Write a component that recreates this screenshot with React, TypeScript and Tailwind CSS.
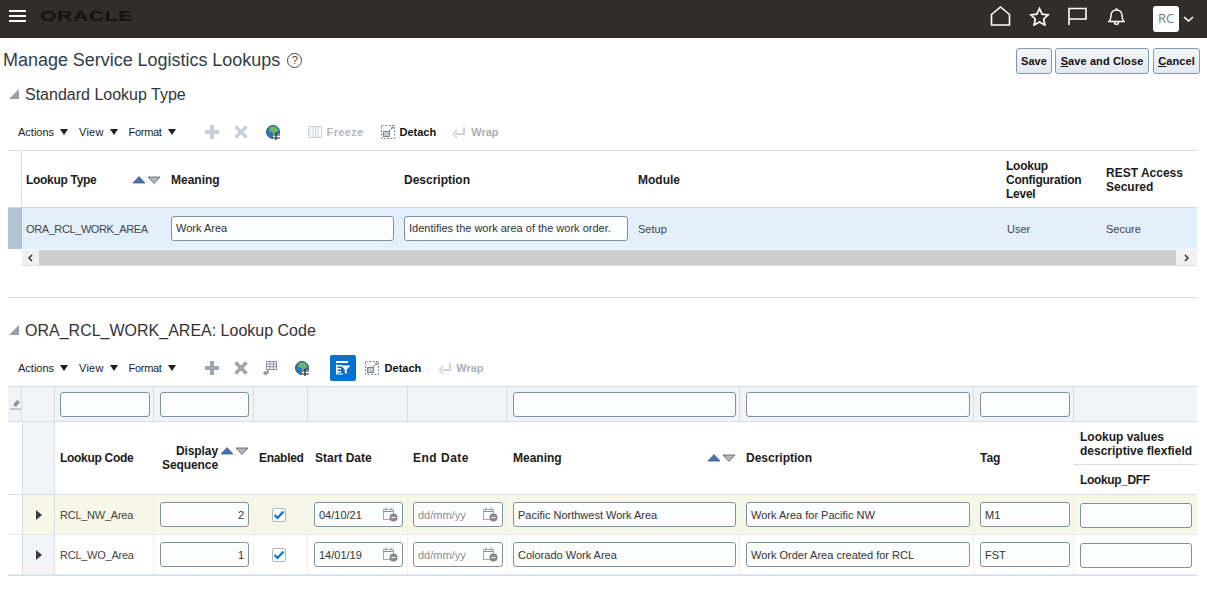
import React from "react";

const ICON_GRAY = "#c9cfd4";

function Caret() {
  return <span className="ml-[6px] w-0 h-0 border-l-[4px] border-r-[4px] border-t-[6px] border-l-transparent border-r-transparent border-t-[#1f1f1f]" />;
}

function Plus({ color }: { color: string }) {
  return (
    <svg width="14" height="14" viewBox="0 0 14 14">
      <path d="M5 0h4v5h5v4H9v5H5V9H0V5h5z" fill={color} />
    </svg>
  );
}

function Cross({ color }: { color: string }) {
  return (
    <svg width="14" height="14" viewBox="0 0 14 14">
      <path d="M1.5 1.5 12.5 12.5M12.5 1.5 1.5 12.5" stroke={color} strokeWidth="3.4" />
    </svg>
  );
}

function Globe() {
  return (
    <svg width="15" height="15" viewBox="0 0 15 15">
      <circle cx="7" cy="7" r="6.5" fill="#2e79ad" />
      <path d="M4 2c2-1 5-1 6 0 1 2 2 3 3 4l-3 1-2 2-2-2-3-1z" fill="#6fb56a" />
      <circle cx="7" cy="7" r="6.5" fill="none" stroke="#255b80" />
      <rect x="7" y="9" width="8" height="5.5" fill="#fff" />
      <path d="M10 8v7M7 10h7M7 13h7" stroke="#222" strokeWidth="1.2" />
    </svg>
  );
}

function Freeze() {
  return (
    <svg width="14" height="14" viewBox="0 0 14 14" fill="none" stroke="#cdd3d8">
      <rect x="0.5" y="1.5" width="13" height="11" />
      <path d="M5 2v10M7.5 2v10M10 2v10M2 4v7" />
    </svg>
  );
}

function Detach() {
  return (
    <svg width="14" height="14" viewBox="0 0 14 14" fill="none" stroke="#7d8388">
      <rect x="0.5" y="0.5" width="13" height="13" strokeDasharray="2 1.5" />
      <rect x="2.5" y="6.5" width="6" height="5" fill="#c6cbd0" />
      <path d="M8 6l4-4M10 2h2v2" />
    </svg>
  );
}

function WrapIcon() {
  return (
    <svg width="14" height="14" viewBox="0 0 14 14" fill="none" stroke="#cdd3d8" strokeWidth="2">
      <path d="M12 2v7H4" />
      <path d="M5 5 1.5 9 5 13" strokeWidth="1.6" />
    </svg>
  );
}

function ColumnsIcon() {
  return (
    <svg width="14" height="15" viewBox="0 0 14 15" fill="none" stroke="#8a9096">
      <path d="M3.5 0.5h10v8h-10zM3.5 3h10M3.500 5.700h10M7 0.500v8M10.300 0.500v8" />
      <path d="M5 9v3H1.500M3.500 10 1 12l2.500 2" strokeWidth="1.5" />
    </svg>
  );
}

function FilterIcon() {
  return (
    <svg width="16" height="16" viewBox="0 0 16 16">
      <path d="M1 1h12v2H1zM1 4.500h1.500v9H1zM1 5h6v1.500H1zM1 8h5v1.500H1zM1 11h5v1.500H1zM1 13.500h7v1H1z" fill="#fff" />
      <path d="M6 5.500h9.500l-3.800 4v4.500l-2-1.200v-3.300z" fill="#fff" />
    </svg>
  );
}

function SortPair() {
  return (
    <svg width="29" height="8" viewBox="0 0 29 8" className="shrink-0">
      <path d="M7 0.500 13 7H1z" fill="#4b71b5" stroke="#3a4f78" strokeWidth="0.7" />
      <path d="M16 1h12l-6 6.500z" fill="#b4b8bc" stroke="#55595c" strokeWidth="0.8" />
    </svg>
  );
}

function Toolbar({ second }: { second?: boolean }) {
  const off = second ? "#9ea4a9" : ICON_GRAY;
  return (
    <div className="flex items-center h-[26px] pl-[18px] text-[11px] text-[#1c1c1c]">
      <span>Actions</span>
      <Caret />
      <span className="ml-[11px] tracking-[0.2px]">View</span>
      <Caret />
      <span className="ml-[11px] tracking-[-0.3px]">Format</span>
      <Caret />
      <span className="ml-[29px]"><Plus color={off} /></span>
      <span className="ml-[15px]"><Cross color={off} /></span>
      {second ? (
        <>
          <span className="ml-[15px]"><ColumnsIcon /></span>
          <span className="ml-[18px]"><Globe /></span>
          <span className="ml-[20px] w-[26px] h-[26px] rounded-[2px] bg-[#0572ce] flex items-center justify-center"><FilterIcon /></span>
          <span className="ml-[9px]"><Detach /></span>
          <span className="ml-[6px] font-bold text-[#111]">Detach</span>
          <span className="ml-[17px]"><WrapIcon /></span>
          <span className="ml-[4px] font-bold text-[#a9afb4]">Wrap</span>
        </>
      ) : (
        <>
          <span className="ml-[18px]"><Globe /></span>
          <span className="ml-[27px]"><Freeze /></span>
          <span className="ml-[5px] font-bold tracking-[0.35px] text-[#b1b6ba]">Freeze</span>
          <span className="ml-[17px]"><Detach /></span>
          <span className="ml-[5px] font-bold text-[#111]">Detach</span>
          <span className="ml-[16px]"><WrapIcon /></span>
          <span className="ml-[5px] font-bold text-[#a9afb4]">Wrap</span>
        </>
      )}
    </div>
  );
}

function SectionTitle({ children }: { children: React.ReactNode }) {
  return (
    <div className="flex items-center h-[24px] pl-[9px]">
      <span className="w-0 h-0 border-b-[10px] border-l-[10px] border-b-[#9a9fa4] border-l-transparent" />
      <span className="ml-[6px] pt-[2px] text-[16px] text-[#333]">{children}</span>
    </div>
  );
}

function Field({ value, width, right, muted, icon }: { value?: string; width: string; right?: boolean; muted?: boolean; icon?: boolean }) {
  return (
    <div className={`relative h-[25px] ${width}`}>
      <input
        readOnly
        value={value ?? ""}
        className={`w-full h-full rounded-[3px] border border-[#7f929e] bg-[#fcfdfe] px-[4px] text-[11px] outline-none ${right ? "text-right" : ""} ${muted ? "text-[#8b8f93]" : "text-[#333]"}`}
      />
      {icon && (
        <svg width="15" height="15" viewBox="0 0 15 15" className="absolute right-[5px] top-[5px]" fill="none">
          <rect x="0.500" y="2.500" width="10" height="10" stroke="#a3a8ac" />
          <path d="M3 0.500v3M8 0.500v3M1 4.500h9" stroke="#8b9095" />
          <circle cx="10.500" cy="10.500" r="4" fill="#83898e" />
          <path d="M8.500 10.500h4" stroke="#fff" />
        </svg>
      )}
    </div>
  );
}

function Check() {
  return (
    <span className="w-[14px] h-[14px] rounded-[2px] border border-[#a9bac6] bg-white flex items-center justify-center">
      <svg width="12" height="10" viewBox="0 0 12 10">
        <path d="M1.500 5 4.500 8 10.500 1.500" fill="none" stroke="#0572ce" strokeWidth="2.200" />
      </svg>
    </span>
  );
}

function Expand() {
  return <span className="w-0 h-0 border-t-[5px] border-b-[5px] border-l-[6px] border-t-transparent border-b-transparent border-l-[#3c3c3c]" />;
}

function LookupTypeTable() {
  const cols = "grid grid-cols-[14px_143px_233px_234px_368px_100px_97px]";
  const head = "flex items-center px-[4px] pt-[2px] font-bold text-[12px] leading-[14px] text-[#1c1c1c]";
  const cell = "flex items-center px-[4px] pt-[2px] text-[11px] text-[#444]";
  const fieldCell = "flex items-center pl-[6px] pb-[2px]";
  return (
    <div className="ml-[8px] mr-[10px] border-t border-[#d6dfe6]">
      <div className={`${cols} h-[56px]`}>
        <div className="border-r border-[#d6dfe6]" />
        <div className={`${head} justify-between`}>
          <span className="tracking-[-0.3px]">Lookup Type</span>
          <SortPair />
        </div>
        <div className={`${head} pl-[6px]`}>Meaning</div>
        <div className={`${head} pl-[6px]`}>Description</div>
        <div className={`${head} pl-[6px]`}>Module</div>
        <div className={`${head} pl-[6px] tracking-[-0.25px]`}>Lookup<br />Configuration<br />Level</div>
        <div className={`${head} pl-[6px]`}>REST Access<br />Secured</div>
      </div>
      <div className={`${cols} h-[42px] bg-[#e3f0fc] border-t border-[#cfdce8]`}>
        <div className="bg-[#b0c4d4]" />
        <div className={`${cell} tracking-[-0.4px]`}>ORA_RCL_WORK_AREA</div>
        <div className={fieldCell}><Field value="Work Area" width="w-[223px]" /></div>
        <div className={fieldCell}><Field value="Identifies the work area of the work order." width="w-[224px]" /></div>
        <div className={`${cell} pl-[6px]`}>Setup</div>
        <div className={`${cell} pl-[7px]`}>User</div>
        <div className={`${cell} pl-[6px]`}>Secure</div>
      </div>
      <div className="flex h-[17px] ml-[14px] border-t border-[#fff] border-b border-b-[#d6dfe6]">
        <div className="w-[17px] flex items-center justify-center bg-[#f1f1f1]">
          <svg width="7" height="8" viewBox="0 0 7 8"><path d="M5 1 2 4l3 3" fill="none" stroke="#333" strokeWidth="1.500" /></svg>
        </div>
        <div className="flex-1 bg-[#cdcdcd]" />
        <div className="w-[21px] flex items-center justify-center bg-[#f1f1f1]">
          <svg width="7" height="8" viewBox="0 0 7 8"><path d="M2 1l3 3-3 3" fill="none" stroke="#333" strokeWidth="1.500" /></svg>
        </div>
      </div>
    </div>
  );
}

const CODE_COLS = "grid grid-cols-[14px_33px_99px_100px_54px_100px_99px_233px_234px_100px_123px]";

function CodeRow({ code, seq, start, meaning, desc, tag, tint }: { code: string; seq: string; start: string; meaning: string; desc: string; tag: string; tint: string }) {
  const cell = "flex items-center text-[11px] text-[#444] border-r border-[#eef1f4]";
  return (
    <div className={`${CODE_COLS} h-[40px] border-b border-[#e4e9ed] ${tint}`}>
      <div className="bg-white" />
      <div className={`flex items-center justify-center border-x border-[#d6dfe6] ${tint === "bg-white" ? "bg-[#f1f3f7]" : ""}`}><Expand /></div>
      <div className={`${cell} pl-[5px] pt-[2px] tracking-[-0.25px]`}>{code}</div>
      <div className={`${cell} pl-[6px]`}><Field value={seq} width="w-[89px]" right /></div>
      <div className={`${cell} pl-[18px]`}><Check /></div>
      <div className={`${cell} pl-[6px]`}><Field value={start} width="w-[89px]" icon /></div>
      <div className={`${cell} pl-[5px]`}><Field value="dd/mm/yy" width="w-[90px]" muted icon /></div>
      <div className={`${cell} pl-[6px]`}><Field value={meaning} width="w-[223px]" /></div>
      <div className={`${cell} pl-[6px]`}><Field value={desc} width="w-[224px]" /></div>
      <div className={`${cell} pl-[6px]`}><Field value={tag} width="w-[90px]" /></div>
      <div className="flex items-center pl-[6px]"><Field width="w-[112px]" /></div>
    </div>
  );
}

function LookupCodeTable() {
  const filterCell = "flex items-center pb-[1px] border-r border-[#d6dfe6]";
  const head = "flex items-center font-bold text-[12px] leading-[14px] text-[#1c1c1c]";
  return (
    <div className="ml-[8px] mr-[10px]">
      <div className={`${CODE_COLS} h-[36px] bg-[#f1f3f7] border-y border-[#d6dfe6]`}>
        <div className="flex items-center justify-center bg-[#f1f3f7] border-r border-[#d6dfe6]">
          <svg width="12" height="12" viewBox="0 0 12 12">
            <path d="M4 7 8 2l3 2-4 5z" fill="#8d9399" />
            <path d="M1 11h11" stroke="#9aa0a5" />
          </svg>
        </div>
        <div className="border-r border-[#d6dfe6]" />
        <div className={`${filterCell} pl-[5px]`}><Field width="w-[90px]" /></div>
        <div className={`${filterCell} pl-[6px]`}><Field width="w-[89px]" /></div>
        <div className={filterCell} />
        <div className={filterCell} />
        <div className={filterCell} />
        <div className={`${filterCell} pl-[6px]`}><Field width="w-[223px]" /></div>
        <div className={`${filterCell} pl-[6px]`}><Field width="w-[224px]" /></div>
        <div className={`${filterCell} pl-[6px]`}><Field width="w-[90px]" /></div>
        <div />
      </div>
      <div className={`${CODE_COLS} h-[73px] border-b border-[#d6dfe6]`}>
        <div />
        <div className="border-x border-[#d6dfe6] bg-[#f1f3f7]" />
        <div className={`${head} pl-[5px] tracking-[-0.3px]`}>Lookup Code</div>
        <div className="flex items-center pl-[8px] font-bold text-[12px] leading-[14px] text-[#1c1c1c]">
          <div className="w-[56px] text-right tracking-[-0.1px]">Display<br />Sequence</div>
          <div className="ml-[2px] mb-[14px]"><SortPair /></div>
        </div>
        <div className={`${head} pl-[5px] tracking-[-0.3px]`}>Enabled</div>
        <div className={`${head} pl-[7px]`}>Start Date</div>
        <div className={`${head} pl-[5px] tracking-[0.5px]`}>End Date</div>
        <div className={`${head} justify-between pl-[6px] pr-[4px]`}>
          <span>Meaning</span>
          <SortPair />
        </div>
        <div className={`${head} pl-[6px]`}>Description</div>
        <div className={`${head} pl-[6px]`}>Tag</div>
        <div className="flex flex-col font-bold text-[12px] leading-[14px] text-[#1c1c1c]">
          <div className="h-[43px] flex items-center pl-[6px] pt-[2px] border-b border-[#d6dfe6]">
            <span>Lookup values<br />descriptive flexfield</span>
          </div>
          <div className="flex-1 flex items-center pl-[6px] tracking-[-0.35px]">Lookup_DFF</div>
        </div>
      </div>
      <CodeRow code="RCL_NW_Area" seq="2" start="04/10/21" meaning="Pacific Northwest Work Area" desc="Work Area for Pacific NW" tag="M1" tint="bg-[#f7f7e8]" />
      <CodeRow code="RCL_WO_Area" seq="1" start="14/01/19" meaning="Colorado Work Area" desc="Work Order Area created for RCL" tag="FST" tint="bg-white" />
      <div className="h-[1px] bg-[#d6dfe6]" />
    </div>
  );
}

function ActionButton({ children, width }: { children: React.ReactNode; width: string }) {
  return (
    <button className={`${width} h-[26px] rounded-[3px] border border-[#7f9bb3] bg-gradient-to-b from-[#f3f6f8] to-[#e4e9ed] text-[11px] font-bold tracking-[0.1px] text-[#111]`}>
      {children}
    </button>
  );
}

export default function App() {
  return (
    <div className="w-[1207px] h-[591px] overflow-hidden bg-white font-['Liberation_Sans',Arial,sans-serif]">
      <header className="h-[38px] bg-[#312d2a] flex items-center">
        <div className="ml-[9px] mb-[7px] w-[17px] flex flex-col gap-[3px]">
          <span className="h-[2px] bg-white" />
          <span className="h-[2px] bg-white" />
          <span className="h-[2px] bg-white" />
        </div>
        <span className="ml-[14px] mb-[7px] text-[15px] leading-none font-bold tracking-[0.5px] text-[#151311] scale-x-[1.4] origin-left">ORACLE</span>
        <div className="ml-auto flex items-center mb-[6px]">
          <svg width="21" height="20" viewBox="0 0 21 20" fill="none" stroke="#fff" strokeWidth="1.600">
            <path d="M1.500 8.500 10.500 1l9 7.500V19h-18z" />
          </svg>
          <svg className="ml-[18px]" width="21" height="19" viewBox="0 0 21 19" fill="none" stroke="#fff" strokeWidth="1.700">
            <path d="M10.500 1.500l2.600 5.600 6.100.7-4.500 4.200 1.200 6-5.400-3-5.400 3 1.200-6L1.800 7.800l6.100-.7z" />
          </svg>
          <svg className="ml-[18px]" width="19" height="18" viewBox="0 0 19 18" fill="none" stroke="#fff" strokeWidth="1.600">
            <path d="M1 18V1.500h17V12H1" />
          </svg>
          <svg className="ml-[21px]" width="17" height="18" viewBox="0 0 17 18" fill="none" stroke="#fff" strokeWidth="1.500">
            <path d="M1 14.500h15c-1.500-1.500-2-3-2-6 0-3-2-5.500-5.500-5.500S3 5.500 3 8.500c0 3-.5 4.500-2 6z" />
            <path d="M8.500 1v2M6.500 15c0 1.500 1 2.500 2 2.500s2-1 2-2.500" />
          </svg>
          <div className="ml-[28px] w-[26px] h-[26px] mt-[6px] rounded-[3px] bg-white flex items-center justify-center text-[13px] text-[#7a7a7a] font-['Open_Sans',sans-serif]">RC</div>
          <svg className="ml-[4px] mr-[13px] mt-[6px]" width="11" height="6" viewBox="0 0 11 6" fill="none" stroke="#fff" strokeWidth="1.600">
            <path d="M1 1l4.500 4L10 1" />
          </svg>
        </div>
      </header>

      <div className="flex items-center justify-between h-[44px] pl-[3px] pr-[7px]">
        <div className="flex items-center">
          <h1 className="text-[18px] tracking-[-0.03px] text-[#333d47]">Manage Service Logistics Lookups</h1>
          <span className="ml-[7px] w-[15px] h-[15px] rounded-full border border-[#444] flex items-center justify-center text-[11px] text-[#444]">?</span>
        </div>
        <div className="flex mt-[2px]">
          <ActionButton width="w-[36px]">Save</ActionButton>
          <div className="w-[3px]" />
          <ActionButton width="w-[94px]"><span className="underline">S</span>ave and Close</ActionButton>
          <div className="w-[4px]" />
          <ActionButton width="w-[47px]"><span className="underline">C</span>ancel</ActionButton>
        </div>
      </div>

      <SectionTitle>Standard Lookup Type</SectionTitle>
      <div className="h-[13px]" />
      <Toolbar />
      <div className="h-[5px]" />
      <LookupTypeTable />

      <div className="ml-[8px] mr-[10px] mt-[31px] border-t border-[#d6dfe6]" />
      <div className="h-[20px]" />
      <SectionTitle>ORA_RCL_WORK_AREA: Lookup Code</SectionTitle>
      <div className="h-[13px]" />
      <Toolbar second />
      <div className="h-[5px]" />
      <LookupCodeTable />
    </div>
  );
}
